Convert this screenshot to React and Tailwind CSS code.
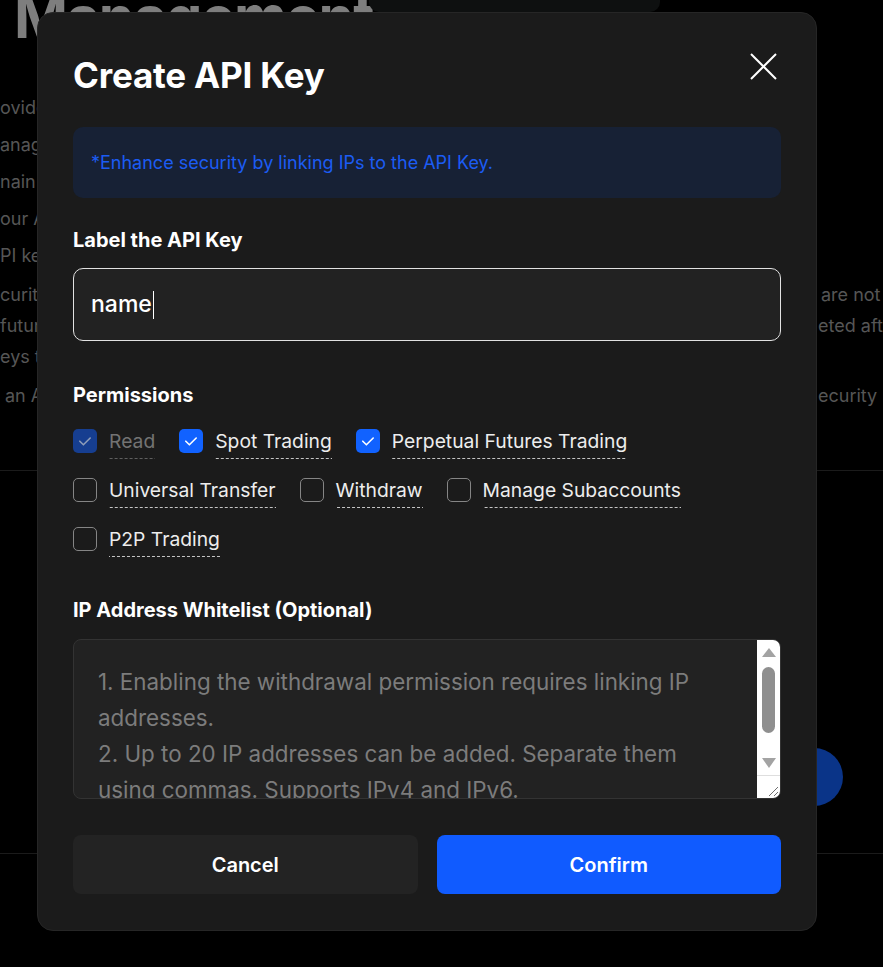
import React from "react";

function Box({ state }) {
  if (state === "off") {
    return <span className="h-6 w-6 shrink-0 rounded-[5px] border-[1.5px] border-[#858585]" />;
  }
  const bg = state === "disabled" ? "bg-[#163e90]" : "bg-[#1162ff]";
  const stroke = state === "disabled" ? "#8d9cb8" : "#ffffff";
  return (
    <span className={`grid h-6 w-6 shrink-0 place-items-center rounded-[5px] ${bg}`}>
      <svg width="24" height="24" viewBox="0 0 24 24" fill="none">
        <path d="M6.8 12.2l3.6 3.6 6.8-6.8" stroke={stroke} strokeWidth="1.6" strokeLinecap="round" strokeLinejoin="round" />
      </svg>
    </span>
  );
}

function Perm({ label, state }) {
  const muted = state === "disabled";
  return (
    <label className="flex items-start gap-3">
      <Box state={state} />
      <span
        className={
          muted
            ? "pb-[6px] text-[19.3px] leading-6 text-[#737373] bg-[linear-gradient(to_right,#5f5f5f_60%,transparent_0)] bg-[length:5px_1px] bg-bottom bg-repeat-x"
            : "pb-[6px] text-[19.3px] leading-6 text-[#ededed] bg-[linear-gradient(to_right,#c4c4c4_60%,transparent_0)] bg-[length:5px_1px] bg-bottom bg-repeat-x"
        }
      >
        {label}
      </span>
    </label>
  );
}

export default function App() {
  return (
    <div className="relative h-[967px] w-full overflow-hidden bg-black font-['Inter',sans-serif]">
      {/* page behind the dialog */}
      <div className="flex items-start">
        <div className="w-[369px] shrink-0">
          <h1 className="ml-[14px] mt-[-15px] whitespace-nowrap text-[58px] font-bold leading-[64px] tracking-tight text-[#7e7e7e]">
            Management
          </h1>
        </div>
        <div className="h-[12px] w-[291px] rounded-b-[10px] bg-[#0e1010]" />
      </div>

      <div className="mt-[40px] text-[18px] text-[#565656]">
        <div className="leading-[37px]">
          <div className="whitespace-nowrap">ovides API keys</div>
          <div className="whitespace-nowrap">anage your keys</div>
          <div className="whitespace-nowrap">nain a record</div>
          <div className="whitespace-nowrap">our API key</div>
          <div className="whitespace-nowrap">PI key settings</div>
        </div>
        <div className="mt-[5px] leading-[31px]">
          <div className="grid grid-cols-[818px_1fr] whitespace-nowrap">
            <span className="overflow-hidden">curity of your</span>
            <span className="overflow-hidden pl-[3px]">are not shared</span>
          </div>
          <div className="grid grid-cols-[818px_1fr] whitespace-nowrap">
            <span className="overflow-hidden">futures trading</span>
            <span className="overflow-hidden">eted after</span>
          </div>
          <div className="whitespace-nowrap">eys that</div>
          <div className="mt-[8px] grid grid-cols-[818px_1fr] whitespace-nowrap">
            <span className="overflow-hidden pl-[5px]">an API key</span>
            <span className="overflow-hidden">ecurity risks</span>
          </div>
        </div>
      </div>

      <div className="mt-[59px] h-px bg-[#1b1b1b]" />
      <div className="flex h-[382px] justify-end pr-[40px] pt-[277px]">
        <div className="h-[58px] w-[58px] rounded-full bg-[#0a3488]" />
      </div>
      <div className="h-px bg-[#1b1b1b]" />

      {/* dialog */}
      <div className="absolute left-[37px] top-[12px] w-[780px] rounded-[16px] border border-[#262626] bg-[#1b1b1b] px-[35px] pb-[36px] pt-[42px]">
        <div className="flex items-start justify-between">
          <h2 className="text-[35px] font-bold leading-10 tracking-[-0.2px] text-white">Create API Key</h2>
          <button className="-mt-[2px] mr-[4px]">
            <svg width="27" height="27" viewBox="0 0 27 27" fill="none">
              <path d="M1 1l25 25M26 1L1 26" stroke="#ffffff" strokeWidth="2" />
            </svg>
          </button>
        </div>

        <div className="mt-[32px] flex h-[71px] items-center rounded-[10px] bg-[#172135] px-[18px] text-[18px] text-[#1c5cf3]">
          *Enhance security by linking IPs to the API Key.
        </div>

        <div className="mt-[30px] text-[20px] font-bold leading-6 text-white">Label the API Key</div>
        <div className="mt-[16px] flex h-[73px] items-center rounded-[10px] border border-[#e2e2e2] bg-[#222222] px-[17px] text-[23px] font-medium text-white">
          name
          <span className="ml-px h-[28px] w-px bg-white" />
        </div>

        <div className="mt-[42px] text-[20px] font-bold leading-6 text-white">Permissions</div>
        <div className="mt-[22px] flex flex-col gap-[19px]">
          <div className="flex gap-6">
            <Perm label="Read" state="disabled" />
            <Perm label="Spot Trading" state="on" />
            <Perm label="Perpetual Futures Trading" state="on" />
          </div>
          <div className="flex gap-6">
            <Perm label="Universal Transfer" state="off" />
            <Perm label="Withdraw" state="off" />
            <Perm label="Manage Subaccounts" state="off" />
          </div>
          <div className="flex gap-6">
            <Perm label="P2P Trading" state="off" />
          </div>
        </div>

        <div className="mt-[41px] text-[20px] font-bold leading-6 text-white">IP Address Whitelist (Optional)</div>
        <div className="mt-[17px] flex h-[160px] overflow-hidden rounded-[8px] border border-[#333333] bg-[#222222]">
          <textarea
            readOnly
            className="block h-full flex-1 resize-none overflow-hidden bg-transparent pl-[24px] pr-[20px] pt-[24px] text-[22.4px] leading-[36px] text-[#7c7c7c] outline-none"
            defaultValue={
              "1. Enabling the withdrawal permission requires linking IP addresses.\n2. Up to 20 IP addresses can be added. Separate them using commas. Supports IPv4 and IPv6.\n"
            }
          />
          {/* scrollbar */}
          <div className="flex w-[23px] shrink-0 flex-col items-center bg-white pt-[8px]">
            <svg width="14" height="9" viewBox="0 0 14 9">
              <polygon points="7,0 14,9 0,9" fill="#a3a3a3" />
            </svg>
            <div className="mt-[10px] h-[66px] w-[13px] rounded-full bg-[#8f8f8f]" />
            <svg className="mt-[25px]" width="14" height="10" viewBox="0 0 14 10">
              <polygon points="0,0 14,0 7,10" fill="#a3a3a3" />
            </svg>
            <div className="mt-auto flex h-[23px] w-full items-end justify-end border-t border-[#dedede] pb-[1px] pr-[1px]">
              <svg width="12" height="12" viewBox="0 0 12 12" fill="none">
                <path d="M11 2L2 11M11 7L7 11" stroke="#6f6f6f" strokeWidth="1" />
              </svg>
            </div>
          </div>
        </div>

        <div className="mt-[36px] grid grid-cols-2 gap-[19px]">
          <button className="h-[59px] rounded-[8px] bg-[#232323] text-[20px] font-semibold text-white">Cancel</button>
          <button className="h-[59px] rounded-[8px] bg-[#105bff] text-[20px] font-semibold text-white">Confirm</button>
        </div>
      </div>
    </div>
  );
}
